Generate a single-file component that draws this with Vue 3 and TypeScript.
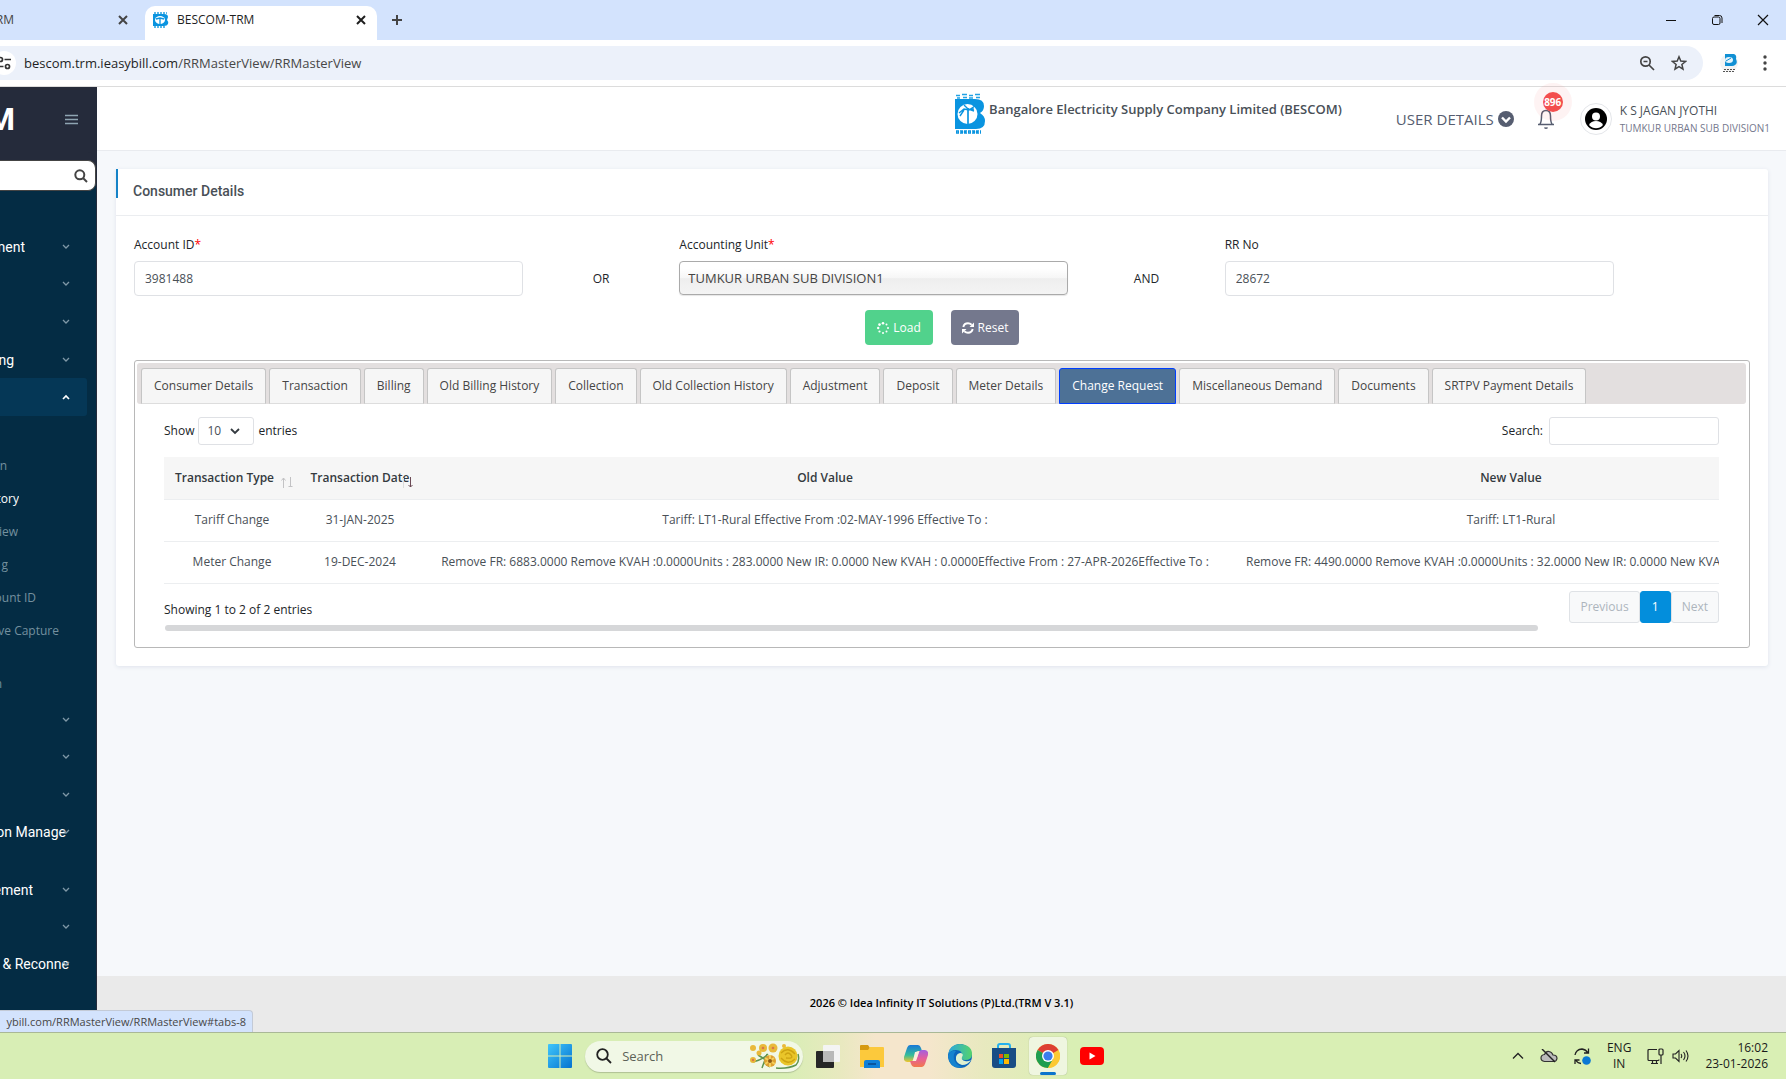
<script setup lang="ts">
import { ref } from 'vue'

interface MenuItem {
  text: string
  end: number
  tall?: boolean
  open?: boolean
}

const upperMenu: MenuItem[] = [
  { text: 'ment', end: 25 },
  { text: '', end: 0 },
  { text: '', end: 0 },
  { text: 'ng', end: 14 },
  { text: '', end: 0, open: true },
]

const subMenu: (MenuItem & { active?: boolean })[] = [
  { text: '', end: 0 },
  { text: 'n', end: 7 },
  { text: 'tory', end: 19, active: true },
  { text: 'iew', end: 18 },
  { text: 'g', end: 8 },
  { text: 'ount ID', end: 36 },
  { text: 've Capture', end: 59 },
  { text: 'n', end: 2, tall: true },
]

const lowerMenu: MenuItem[] = [
  { text: '', end: 0 },
  { text: '', end: 0 },
  { text: '', end: 0 },
  { text: 'on Manage', end: 66, tall: true },
  { text: 'ement', end: 33 },
  { text: '', end: 0 },
  { text: '& Reconne', end: 69, tall: true },
]

const tabs = [
  'Consumer Details',
  'Transaction',
  'Billing',
  'Old Billing History',
  'Collection',
  'Old Collection History',
  'Adjustment',
  'Deposit',
  'Meter Details',
  'Change Request',
  'Miscellaneous Demand',
  'Documents',
  'SRTPV Payment Details',
]
const activeTab = ref('Change Request')

const rows = [
  {
    type: 'Tariff Change',
    date: '31-JAN-2025',
    oldValue: 'Tariff: LT1-Rural Effective From :02-MAY-1996 Effective To :',
    newValue: 'Tariff: LT1-Rural',
  },
  {
    type: 'Meter Change',
    date: '19-DEC-2024',
    oldValue:
      'Remove FR: 6883.0000 Remove KVAH :0.0000Units : 283.0000 New IR: 0.0000 New KVAH : 0.0000Effective From : 27-APR-2026Effective To :',
    newValue: 'Remove FR: 4490.0000 Remove KVAH :0.0000Units : 32.0000 New IR: 0.0000 New KVAH : 0.0000',
  },
]

const accountId = ref('3981488')
const rrNo = ref('28672')
const search = ref('')
</script>

<template>
  <div class="screen">
    <header class="tabstrip">
      <div class="btab">
        <span class="cut btab-cut"><span>RM</span></span>
        <button class="plain" aria-label="Close tab">
          <svg width="10" height="10" viewBox="0 0 10 10"><path d="M1 1l8 8M9 1l-8 8" stroke="#444" stroke-width="2" /></svg>
        </button>
      </div>
      <div class="btab btab-active">
        <svg class="favicon" width="16" height="16" viewBox="0 0 16 16">
          <path d="M1 1h13M1 15h12" stroke="#5bb8e8" stroke-width="2" stroke-dasharray="2 1" />
          <path d="M0 2h11q4 0 4 3l-1 3q2 2 1 4-1 2-4 2H0z" fill="#0a94e0" />
          <ellipse cx="7" cy="8" rx="5" ry="4" fill="#fff" />
          <path d="M3 7l4-1 4 1M7 6v6" stroke="#0a94e0" stroke-width="1.3" fill="none" />
        </svg>
        <span class="btab-title">BESCOM-TRM</span>
        <button class="plain" aria-label="Close tab">
          <svg width="10" height="10" viewBox="0 0 10 10"><path d="M1 1l8 8M9 1l-8 8" stroke="#1f1f1f" stroke-width="2" /></svg>
        </button>
      </div>
      <button class="plain newtab" aria-label="New tab">
        <svg width="12" height="12" viewBox="0 0 12 12"><path d="M6 1v10M1 6h10" stroke="#444" stroke-width="2" /></svg>
      </button>
      <div class="wincontrols">
        <button class="plain" aria-label="Minimize">
          <svg width="12" height="12" viewBox="0 0 12 12"><path d="M1 6.500h10" stroke="#111" /></svg>
        </button>
        <button class="plain" aria-label="Restore">
          <svg width="12" height="12" viewBox="0 0 12 12" fill="none" stroke="#111"><rect x="1.500" y="3" width="7.500" height="7.500" rx="1.500" /><path d="M3.500 1.500h5q2.500 0 2.500 2.500v5" /></svg>
        </button>
        <button class="plain" aria-label="Close window">
          <svg width="12" height="12" viewBox="0 0 12 12"><path d="M1 1l10 10M11 1L1 11" stroke="#111" stroke-width="1.200" /></svg>
        </button>
      </div>
    </header>

    <div class="toolbar">
      <div class="address">
        <button class="plain site-chip" aria-label="Site information">
          <svg width="16" height="16" viewBox="0 0 16 16" fill="none" stroke="#333" stroke-width="1.700"><circle cx="4.500" cy="4.500" r="2" /><path d="M8.500 4.500H15M1 11.500h6.500" /><circle cx="11.500" cy="11.500" r="2" /></svg>
        </button>
        <span class="url"><b>bescom.trm.ieasybill.com</b>/RRMasterView/RRMasterView</span>
        <button class="plain" aria-label="Zoom">
          <svg width="16" height="16" viewBox="0 0 16 16" fill="none" stroke="#444" stroke-width="1.700"><circle cx="6.500" cy="6.500" r="4.700" /><path d="M10 10l5 5M4.500 6.500h4" /></svg>
        </button>
        <button class="plain" aria-label="Bookmark this tab">
          <svg width="16" height="16" viewBox="0 0 16 16" fill="none" stroke="#444" stroke-width="1.500"><path d="M8 1.800l1.800 4.300 4.700.4-3.600 3 1.100 4.600L8 11.700l-4 2.400 1.100-4.600-3.600-3 4.700-.4z" /></svg>
        </button>
      </div>
      <button class="plain profile" aria-label="Profile">
        <svg width="18" height="20" viewBox="0 0 18 20">
          <circle cx="9" cy="10" r="9" fill="#f3f3f3" />
          <path d="M5 1h9q3 1 2 5 2 4-1 6-1 1-3 1H5z" fill="#1190d4" />
          <ellipse cx="9" cy="7" rx="4" ry="3" fill="#e4f4fc" />
          <path d="M6 8l5-3" stroke="#1190d4" />
          <path d="M4 16.500h11M3 18.500h12" stroke="#555" stroke-dasharray="2 1" />
        </svg>
      </button>
      <button class="plain kebab" aria-label="Menu">
        <svg width="4" height="16" viewBox="0 0 4 16" fill="#444"><circle cx="2" cy="2" r="1.700" /><circle cx="2" cy="8" r="1.700" /><circle cx="2" cy="14" r="1.700" /></svg>
      </button>
    </div>

    <div class="page">
      <aside class="sidebar">
        <div class="brand">
          <span class="cut brand-name"><span>M</span></span>
          <button class="plain" aria-label="Toggle menu">
            <svg width="13" height="11" viewBox="0 0 13 11"><path d="M0 1.500h13M0 5.500h13M0 9.500h13" stroke="#8fa5b2" stroke-width="1.700" /></svg>
          </button>
        </div>
        <div class="side-search">
          <input type="text" aria-label="Search menu" />
          <svg width="14" height="14" viewBox="0 0 14 14" fill="none" stroke="#444" stroke-width="2"><circle cx="5.800" cy="5.800" r="4.500" /><path d="M9 9l4 4" /></svg>
        </div>
        <nav>
          <ul class="menu menu-upper">
            <li v-for="(item, i) in upperMenu" :key="i" :class="{ open: item.open }">
              <a href="#" class="cut" :style="{ width: item.end + 'px' }"><span>{{ item.text }}</span></a>
              <svg v-if="item.open" class="arrow" width="8" height="6" viewBox="0 0 8 6"><path d="M1 5l3-3 3 3" fill="none" stroke="#fff" stroke-width="1.700" /></svg>
              <svg v-else class="arrow" width="8" height="6" viewBox="0 0 8 6"><path d="M1 1l3 3 3-3" fill="none" stroke="#7f98a7" stroke-width="1.300" /></svg>
            </li>
          </ul>
          <ul class="submenu">
            <li v-for="(item, i) in subMenu" :key="i" :class="{ active: item.active, tall: item.tall }">
              <a href="#" class="cut" :style="{ width: item.end + 'px' }"><span>{{ item.text }}</span></a>
            </li>
          </ul>
          <ul class="menu menu-lower">
            <li v-for="(item, i) in lowerMenu" :key="i" :class="{ tall: item.tall }">
              <a href="#" class="cut" :style="{ width: item.end + 'px' }"><span>{{ item.text }}</span></a>
              <svg class="arrow" width="8" height="6" viewBox="0 0 8 6"><path d="M1 1l3 3 3-3" fill="none" stroke="#7f98a7" stroke-width="1.300" /></svg>
            </li>
          </ul>
        </nav>
      </aside>

      <div class="content">
        <header class="topbar">
          <div class="company">
            <svg width="30" height="42" viewBox="0 0 30 42">
              <path d="M1 2.500h4M7 1.500h5M14 2.500h4M20 1.500h5M2 5h3M8 4.500h4M14 5h4M21 4.500h4" stroke="#22a2e4" stroke-width="1.600" />
              <path d="M0 6h20q9 0 9 7 0 5-4 7 5 3 5 8 0 8-9 8H0z" fill="#0a94e0" />
              <circle cx="12.500" cy="21" r="10" fill="#fff" />
              <path d="M13 15v16" stroke="#0a94e0" stroke-width="1.700" />
              <path d="M4 20l5-4 5 1 6-4M5 23l4-6M9 12l4 4 6 2M13 17l6-1" fill="none" stroke="#0a94e0" stroke-width="1.400" />
              <path d="M1 39h25" stroke="#0a94e0" stroke-width="3.500" stroke-dasharray="3 1" />
              <path d="M2 39h23" stroke="#8fd0f2" stroke-width=".7" stroke-dasharray="1 2" />
            </svg>
            <strong>Bangalore Electricity Supply Company Limited (BESCOM)</strong>
          </div>
          <button class="plain user-details">
            USER DETAILS
            <svg width="16" height="16" viewBox="0 0 16 16"><circle cx="8" cy="8" r="8" fill="#565d70" /><path d="M4 6.500l4 4 4-4" fill="none" stroke="#fff" stroke-width="2.400" /></svg>
          </button>
          <button class="plain bell" aria-label="Notifications">
            <svg width="18" height="22" viewBox="0 0 18 22" fill="none" stroke="#565d70" stroke-width="1.500"><path d="M1 16.500h16M3 16q1.500-2 1.500-8 0-5.500 4.500-5.500t4.500 5.500q0 6 1.500 8M7.500 19.500q1.500 1.500 3 0" /></svg>
            <span class="badge">896</span>
          </button>
          <div class="user">
            <span class="avatar">
              <svg width="22" height="22" viewBox="0 0 22 22"><circle cx="11" cy="11" r="11" /><circle cx="11" cy="8.500" r="4" fill="#fff" /><path d="M4 17q2-4 7-4t7 4q-3 3.300-7 3.300T4 17z" fill="#fff" /></svg>
            </span>
            <div>
              <p class="user-name">K S JAGAN JYOTHI</p>
              <p class="user-unit">TUMKUR URBAN SUB DIVISION1</p>
            </div>
          </div>
        </header>

        <main>
          <section class="card">
            <div class="card-head"><h1>Consumer Details</h1></div>

            <form class="filters" @submit.prevent>
              <div class="field">
                <label for="account">Account ID<i>*</i></label>
                <input id="account" v-model="accountId" type="text" />
              </div>
              <span class="joiner">OR</span>
              <div class="field">
                <label for="unit">Accounting Unit<i>*</i></label>
                <select id="unit"><option>TUMKUR URBAN SUB DIVISION1</option></select>
              </div>
              <span class="joiner">AND</span>
              <div class="field">
                <label for="rr">RR No</label>
                <input id="rr" v-model="rrNo" type="text" />
              </div>
            </form>

            <div class="actions">
              <button class="btn btn-load">
                <svg width="12" height="12" viewBox="0 0 12 12" fill="#fff"><circle cx="6" cy="1.300" r="1.300" /><circle cx="9.500" cy="2.600" r="1" /><circle cx="11" cy="6" r="1" /><circle cx="9.500" cy="9.500" r="1" /><circle cx="6" cy="11" r="1" /><circle cx="2.500" cy="9.500" r="1.100" /><circle cx="1.200" cy="6" r="1.200" /><circle cx="2.500" cy="2.600" r="1.300" /></svg>
                Load
              </button>
              <button class="btn btn-reset">
                <svg width="12" height="12" viewBox="0 0 12 12"><path d="M1.300 5q.8-3.700 4.700-3.700 2 0 3.700 1.500M10.700 7q-.8 3.700-4.700 3.700-2 0-3.700-1.500" fill="none" stroke="#fff" stroke-width="1.900" /><path d="M12 .5V5H7.500zM0 11.500V7h4.500z" fill="#fff" /></svg>
                Reset
              </button>
            </div>

            <div class="tabs">
              <div class="tabs-nav" role="tablist">
                <button
                  v-for="tab in tabs"
                  :key="tab"
                  role="tab"
                  :aria-selected="tab === activeTab"
                  :class="['tab', { 'tab-active': tab === activeTab }]"
                  @click="activeTab = tab"
                >{{ tab }}</button>
              </div>

              <div class="panel">
                <div class="table-tools">
                  <label class="length">
                    Show
                    <span class="length-box">
                      <select><option>10</option></select>
                      <svg width="10" height="7" viewBox="0 0 10 7"><path d="M1 1l4 4 4-4" fill="none" stroke="#343a40" stroke-width="1.800" /></svg>
                    </span>
                    entries
                  </label>
                  <label class="finder">Search: <input v-model="search" type="search" /></label>
                </div>

                <div class="table-wrap">
                  <table>
                    <colgroup><col class="c-type" /><col class="c-date" /><col class="c-old" /><col class="c-new" /></colgroup>
                    <thead>
                      <tr>
                        <th class="sortable sortable-room">Transaction Type<svg class="sort" width="12" height="11" viewBox="0 0 12 11" fill="none" stroke="#c3c3c5"><path d="M2.500 11V1M.5 3.500l2-2.500 2 2.500M9.500 0v10M7.500 9.500h4" /></svg></th>
                        <th class="sortable">Transaction Date<svg class="sort" width="12" height="11" viewBox="0 0 12 11" fill="none"><path d="M2.500 11V1" stroke="#dcdcdc" /><path d="M9.500 0v10M7.500 8l2 2 2-2" stroke="#6b4a55" /></svg></th>
                        <th>Old Value</th>
                        <th>New Value</th>
                      </tr>
                    </thead>
                    <tbody>
                      <tr v-for="row in rows" :key="row.date">
                        <td>{{ row.type }}</td>
                        <td>{{ row.date }}</td>
                        <td>{{ row.oldValue }}</td>
                        <td>{{ row.newValue }}</td>
                      </tr>
                    </tbody>
                  </table>
                </div>

                <div class="table-foot">
                  <p>Showing 1 to 2 of 2 entries</p>
                  <div class="pager">
                    <button disabled>Previous</button>
                    <button class="current">1</button>
                    <button disabled>Next</button>
                  </div>
                </div>
                <div class="hscroll"></div>
              </div>
            </div>
          </section>
        </main>

        <footer>2026 © Idea Infinity IT Solutions (P)Ltd.(TRM V 3.1)</footer>
      </div>
      <div class="cut status"><span>ybill.com/RRMasterView/RRMasterView#tabs-8</span></div>
    </div>

    <div class="taskbar">
      <div class="apps">
        <button class="plain app" aria-label="Start">
          <svg width="24" height="24" viewBox="0 0 24 24">
            <defs><linearGradient id="win" x1="0" y1="0" x2="1" y2="1"><stop offset="0" stop-color="#3fc6fb" /><stop offset="1" stop-color="#0673d0" /></linearGradient></defs>
            <path d="M0 1q0-1 1-1h10.500v11.500H0zM12.500 0H23q1 0 1 1v10.500H12.500zM0 12.500h11.500V24H1q-1 0-1-1zM12.500 12.500H24V23q0 1-1 1H12.500z" fill="url(#win)" />
          </svg>
        </button>
        <label class="task-search">
          <svg width="16" height="16" viewBox="0 0 16 16" fill="none" stroke="#222" stroke-width="1.800"><circle cx="6.500" cy="6.500" r="5.300" /><path d="M10.500 10.500l4.500 4.500" /></svg>
          <input type="text" placeholder="Search" aria-label="Search" />
          <svg width="50" height="26" viewBox="0 0 50 26">
            <g fill="none" stroke="#5f9450" stroke-width="1.500"><path d="M3 19q9-2 15-8M12 25q3-8 5-14M26 25q12 1 20-3 4-4 2-11M8 12l8 5M20 24l-6-4" /></g>
            <g fill="#e9b93a"><circle cx="3" cy="5" r="3" /><circle cx="13" cy="5" r="4" /><circle cx="23" cy="5" r="4.500" /><circle cx="9" cy="10" r="2.500" /><circle cx="3" cy="17" r="3" /><circle cx="34" cy="3" r="2" /></g>
            <circle cx="20" cy="18" r="6" fill="#dda032" /><path d="M15 15l10 6M20 12v12M15 21l9-6" stroke="#f5cf5c" stroke-width="2" /><circle cx="20" cy="18" r="2" fill="#8c5a18" />
            <circle cx="38" cy="13" r="9.500" fill="#e9c52a" /><path d="M31 10q7-7 14 1M31 15q7 8 14 1M35 12q3-4 6 0t-5 3" fill="none" stroke="#cda312" stroke-width="1.300" />
            <g fill="#d9764a"><circle cx="13" cy="5" r="1.300" /><circle cx="23" cy="5" r="1.300" /><circle cx="3" cy="17" r="1.200" /></g>
          </svg>
        </label>
        <button class="plain app" aria-label="Task view">
          <svg width="24" height="24" viewBox="0 0 24 24"><rect y="7" width="18" height="17" rx="1" fill="#262626" /><rect x="7" y="1" width="17" height="17" rx="1" fill="#f4f4f4" /><rect x="7" y="7" width="11" height="11" fill="#b9b9b9" /></svg>
        </button>
        <button class="plain app" aria-label="File Explorer">
          <svg width="24" height="24" viewBox="0 0 24 24"><path d="M0 2q0-1 1-1h7l2 3v3H0z" fill="#d69a10" /><path d="M0 6h8l2-3h13q1 0 1 1v19H0z" fill="#fcc93c" /><path d="M4 24v-6q0-2 2-2h12q2 0 2 2v6z" fill="#1180d8" /><path d="M8 20h8" stroke="#0a559f" stroke-width="2" /></svg>
        </button>
        <button class="plain app" aria-label="Copilot">
          <svg width="24" height="24" viewBox="0 0 24 24">
            <defs>
              <linearGradient id="cpa" x1="0" y1="0" x2="0" y2="1"><stop offset="0" stop-color="#1a78d8" /><stop offset=".6" stop-color="#35bd9a" /><stop offset="1" stop-color="#f3c52b" /></linearGradient>
              <linearGradient id="cpb" x1="0" y1="1" x2="0" y2="0"><stop offset="0" stop-color="#f2794b" /><stop offset=".5" stop-color="#e55f9b" /><stop offset="1" stop-color="#a35fe0" /></linearGradient>
            </defs>
            <path d="M6 1h8q2 0 3 3l1 3h-4q-2 0-3 3l-2 6q-1 2-3 2H3q-4-1-3-5l3-9q1-3 3-3z" fill="url(#cpa)" />
            <path d="M18 23h-8q-2 0-3-3l-1-3h4q2 0 3-3l2-6q1-2 3-2h3q4 1 3 5l-3 9q-1 3-3 3z" fill="url(#cpb)" />
            <path d="M11 8h4l-3 9H9z" fill="#fbeedd" />
          </svg>
        </button>
        <button class="plain app" aria-label="Edge">
          <svg width="24" height="24" viewBox="0 0 24 24">
            <defs><linearGradient id="edg" x1="0" y1="0" x2="1" y2="0"><stop offset="0" stop-color="#2aa7e0" /><stop offset="1" stop-color="#55d36b" /></linearGradient></defs>
            <circle cx="12" cy="12" r="12" fill="#0c66bb" />
            <path d="M0 11Q2 0 12 0q12 1 12 10 0 6-7 6-4 0-3-3Q15 6 8 6 2 6 0 11z" fill="url(#edg)" />
            <path d="M14 13q-1 3 3 4 3 1 6-1-3 5-9 5-7-2-6-8 1-4 5-4 3 1 1 4z" fill="#dff0d0" />
            <path d="M0 12q2-6 8-5-3 3-2 8t8 8Q2 26 0 12z" fill="#1583cf" />
          </svg>
        </button>
        <button class="plain app" aria-label="Microsoft Store">
          <svg width="24" height="26" viewBox="0 0 24 26"><path d="M6 6V3q0-2 2-2h8q2 0 2 2v3" fill="none" stroke="#24b1ee" stroke-width="2" /><path d="M0 5h24v17q0 3-3 3H3q-3 0-3-3z" fill="#184d85" /><path d="M7 11h4v4H7z" fill="#f05022" /><path d="M12 11h5v4h-5z" fill="#7fba00" /><path d="M7 16h4v5H7z" fill="#00a4ef" /><path d="M12 16h5v5h-5z" fill="#ffb900" /></svg>
        </button>
        <button class="plain app app-current" aria-label="Chrome">
          <svg width="24" height="24" viewBox="0 0 24 24"><circle cx="12" cy="12" r="12" fill="#fcc934" /><path d="M12 12L1.600 6A12 12 0 0 1 22.400 6z" fill="#dd4032" /><path d="M12 12L1.600 6A12 12 0 0 0 12 24l5.500-9z" fill="#1e9e50" /><path d="M12 6h10.400L17 15l-5 9a12 12 0 0 0 10.400-18z" fill="#fcc934" /><circle cx="12" cy="12" r="6" fill="#fff" /><circle cx="12" cy="12" r="4.600" fill="#3b7ded" /></svg>
        </button>
        <button class="plain app" aria-label="YouTube">
          <svg width="24" height="18" viewBox="0 0 24 18"><rect width="24" height="18" rx="4" fill="#f00" /><path d="M9.500 5.500l6 3.500-6 3.500z" fill="#fff" /></svg>
        </button>
      </div>
      <div class="tray">
        <svg width="12" height="8" viewBox="0 0 12 8"><path d="M1 6.500l5-5 5 5" fill="none" stroke="#222" stroke-width="1.300" /></svg>
        <svg width="18" height="14" viewBox="0 0 18 14"><path d="M4.500 12.500Q1 12 1 9t3.500-3.500Q6 2 9 2.500t4 3.500q4 0 4 3.500-.5 3-3.500 3z" fill="#bbb" stroke="#333" stroke-width="1.200" /><path d="M2 0l13 13" stroke="#222" stroke-width="1.400" /></svg>
        <svg width="17" height="17" viewBox="0 0 17 17" fill="none" stroke="#222" stroke-width="1.300"><path d="M1 7q1-5.500 7-6 4 .500 6 4M14.500.5V5H10M1 16v-4h4.500M2 12.500q2 3 5 3" /><circle cx="12.500" cy="12.500" r="4.300" fill="#0a78d4" stroke="none" /></svg>
        <span class="lang">ENG<br />IN</span>
        <div class="devices">
          <svg width="17" height="17" viewBox="0 0 17 17" fill="none" stroke="#222" stroke-width="1.200"><path d="M10 1.500H2Q1 1.500 1 2.500v9q0 1 1 1h9q1 0 1-1M4 15.500h7M5.500 13v2M9.500 13v2M14 7v9" /><rect x="12" y="1" width="4" height="6" rx="1" /></svg>
          <svg width="17" height="14" viewBox="0 0 17 14" fill="none" stroke="#222" stroke-width="1.100"><path d="M1 5h2.500L7 1.500v11L3.500 9H1zM9 5q1.500 2 0 4M11.500 3q3 4 0 8M14 1.500q4 5.500 0 11" /></svg>
        </div>
        <time>16:02<br />23-01-2026</time>
      </div>
    </div>
  </div>
</template>

<style>
body {
  margin: 0;
  font-family: 'Open Sans', 'Noto Sans', sans-serif;
}
</style>

<style scoped>
.screen {
  min-height: 100vh;
  display: flex;
  flex-direction: column;
  font-size: 12px;
  line-height: 18px;
  color: #212529;
  box-sizing: border-box;
}
.screen *,
.screen *::before {
  box-sizing: border-box;
}
p,
h1,
ul {
  margin: 0;
  padding: 0;
  list-style: none;
}
svg {
  display: block;
  flex: none;
}
button,
input,
select {
  font: inherit;
  color: inherit;
}
a {
  color: inherit;
  text-decoration: none;
}
.plain {
  display: flex;
  align-items: center;
  justify-content: center;
  padding: 0;
  border: 0;
  background: none;
}
/* keeps the tail of a label in view when its start is off the left edge */
.cut {
  display: flex;
  justify-content: flex-end;
  overflow: hidden;
  white-space: nowrap;
}

/* browser frame */
.tabstrip {
  height: 40px;
  display: flex;
  align-items: flex-end;
  background: #d3e3fd;
}
.btab {
  width: 145px;
  height: 34px;
  padding-right: 17px;
  display: flex;
  align-items: center;
  justify-content: space-between;
  color: #444;
  padding-bottom: 6px;
}
.btab-cut {
  width: 14px;
}
.btab-active {
  width: 232px;
  padding: 0 11px 6px 8px;
  gap: 8px;
  border-radius: 10px 10px 0 0;
  background: #fff;
  color: #1f1f1f;
}
.btab-title {
  flex: 1;
}
.newtab {
  width: 40px;
  height: 40px;
}
.wincontrols {
  margin-left: auto;
  display: flex;
}
.wincontrols button {
  width: 46px;
  height: 40px;
}
.toolbar {
  height: 47px;
  display: flex;
  align-items: center;
  background: #fff;
  border-bottom: 1px solid #dcdcdc;
}
.address {
  flex: 1;
  height: 34px;
  padding-right: 16px;
  display: flex;
  align-items: center;
  gap: 16px;
  background: #ecf1fa;
  border-radius: 0 17px 17px 0;
  overflow: hidden;
  font-size: 13px;
}
.site-chip {
  width: 24px;
  height: 24px;
  margin-left: -8px;
  border-radius: 50%;
  background: #fff;
}
.url {
  flex: 1;
  margin-left: -8px;
  color: #474747;
}
.url b {
  font-weight: 400;
  color: #1f1f1f;
}
.profile {
  margin-left: 17px;
}
.kebab {
  width: 40px;
  margin-right: 8px;
  padding-left: 14px;
}

/* page */
.page {
  position: relative;
  flex: 1;
  display: flex;
  background: #f6f8fb;
}
.sidebar {
  width: 97px;
  overflow: hidden;
  background: #042c44;
  border-right: 1px solid #252b3b;
  font-family: Roboto, sans-serif;
  font-size: 14px;
  color: #fff;
}
.brand {
  height: 73px;
  padding: 0 18px 9px 0;
  display: flex;
  align-items: center;
  justify-content: space-between;
  background: #252b3b;
}
.brand-name {
  width: 15px;
  font-size: 32px;
  font-weight: 700;
  line-height: 40px;
}
.side-search {
  height: 31px;
  padding-right: 7px;
  display: flex;
  align-items: center;
  background: #fff;
  border: 1px solid #444;
  border-left: 0;
  border-radius: 0 8px 8px 0;
  box-shadow: 0 -8px 0 #252b3b;
}
.side-search input {
  flex: 1;
  min-width: 0;
  border: 0;
  padding: 0;
  background: none;
}
nav {
  padding-top: 37px;
}
.menu {
  display: flex;
  flex-direction: column;
}
.menu-upper {
  height: 188px;
}
.menu-lower {
  height: 302px;
}
.menu li {
  position: relative;
  flex: 1;
  display: flex;
  align-items: center;
}
.menu .tall {
  flex: 0 0 57px;
  padding-bottom: 20px;
}
.menu .open {
  margin-right: 9px;
  background: #053756;
  border-radius: 0 3px 3px 0;
}
.arrow {
  position: absolute;
  left: 62px;
}
.submenu {
  font-family: 'Open Sans', sans-serif;
  font-size: 12px;
  color: #74909f;
}
.submenu li {
  height: 33px;
  display: flex;
  align-items: center;
}
.submenu .active {
  color: #fff;
}
.submenu .tall {
  height: 54px;
  padding-top: 19px;
}
.content {
  flex: 1;
  min-width: 0;
  display: flex;
  flex-direction: column;
}
.topbar {
  height: 64px;
  padding-right: 16px;
  display: flex;
  align-items: center;
  justify-content: flex-end;
  background: #fff;
  border-bottom: 1px solid #e9ebef;
}
.company {
  display: flex;
  gap: 4px;
  margin-right: 54px;
  align-self: flex-start;
  padding-top: 6px;
  font-size: 13px;
  line-height: 32px;
  color: #495057;
}
.company strong {
  font-weight: 600;
}
.user-details {
  gap: 4px;
  font-size: 15px;
  color: #565d70;
}
.bell {
  position: relative;
  margin: 0 25px 0 23px;
}
.badge {
  position: absolute;
  left: 6px;
  top: -16px;
  width: 20px;
  height: 20px;
  border-radius: 50%;
  background: #f34e4e;
  box-shadow: 0 0 0 9px #f34e4e12;
  color: #fff;
  font-size: 10px;
  font-weight: 700;
  line-height: 20px;
}
.user {
  display: flex;
  align-items: center;
  gap: 8px;
}
.avatar {
  padding: 4px;
  border: 1px solid #e4e6ea;
  border-radius: 50%;
}
.user-name {
  color: #495057;
}
.user-unit {
  font-size: 10px;
  line-height: 16px;
  color: #74788d;
}

main {
  flex: 1;
  padding: 18px 18px 24px 19px;
}
.card {
  background: #fff;
  border-radius: 3px;
  box-shadow: 0 1px 4px #dfe3ec;
  padding-bottom: 18px;
}
.card-head {
  position: relative;
  height: 47px;
  padding-left: 17px;
  border-bottom: 1px solid #ebedf0;
}
.card-head::before {
  content: '';
  position: absolute;
  left: 0;
  top: 0;
  width: 2px;
  height: 29px;
  background: #1583c7;
}
h1 {
  font-family: Roboto, sans-serif;
  font-size: 14px;
  line-height: 45px;
  font-weight: 500;
  color: #495057;
}
.filters {
  display: grid;
  grid-template-columns: 3fr 1fr 3fr 1fr 3fr 1fr;
  padding: 20px 8px 0 8px;
}
.field {
  display: flex;
  flex-direction: column;
  gap: 7px;
  padding: 0 10px;
}
.field i {
  color: #f00;
  font-style: normal;
}
.field input,
.field select {
  height: 35px;
  padding: 0 10px;
  border: 1px solid #dfe1e5;
  border-radius: 4px;
  background: #fff;
  color: #495057;
}
.field select {
  appearance: none;
  height: 34px;
  padding: 0 8px;
  border-color: #aaa;
  background: linear-gradient(#fff 20%, #f6f6f6 50%, #eee 52%, #f4f4f4 100%);
  box-shadow: 0 1px 1px #0000001a;
  font-size: 13px;
  color: #444;
}
.joiner {
  align-self: end;
  text-align: center;
  line-height: 35px;
}
.actions {
  display: flex;
  justify-content: center;
  gap: 18px;
  padding: 14px 0 15px;
}
.btn {
  width: 68px;
  height: 35px;
  display: flex;
  align-items: center;
  justify-content: center;
  gap: 4px;
  padding: 0;
  border: 0;
  border-radius: 4px;
  color: #fff;
}
.btn-load {
  background: #51d28c;
}
.btn-reset {
  background: #74788d;
}

.tabs {
  margin: 0 18px;
  padding: 2px 3px 16px 2px;
  border: 1px solid #b8b8b8;
  border-radius: 3px;
}
.tabs-nav {
  display: flex;
  gap: 3px;
  padding: 5px 4px 0;
  background: #e3dfdf;
  border-radius: 3px;
}
.tab {
  height: 36px;
  padding: 0 12px;
  border: 1px solid #c5c5c5;
  border-bottom-color: #dddddd;
  border-radius: 3px 3px 0 0;
  background: #f6f6f6;
  color: #454545;
  white-space: nowrap;
}
.tab-active {
  border-color: #003eff;
  background: #4d7196;
  color: #fff;
}
.panel {
  padding: 13px 27px 0 27px;
}
.table-tools {
  display: flex;
  justify-content: space-between;
}
.length,
.finder {
  display: flex;
  align-items: center;
  gap: 4px;
}
.length-box {
  position: relative;
  display: flex;
}
.length-box select {
  appearance: none;
  width: 56px;
  height: 28px;
  padding: 0 8px;
  border: 1px solid #dfe1e5;
  border-radius: 3px;
  background: #fff;
  color: #495057;
}
.length-box svg {
  position: absolute;
  right: 14px;
  top: 11px;
  pointer-events: none;
}
.finder {
  gap: 6px;
}
.finder input {
  width: 170px;
  height: 28px;
  padding: 0 8px;
  border: 1px solid #dfe1e5;
  border-radius: 3px;
}
.table-wrap {
  margin-top: 12px;
  overflow: hidden;
}
table {
  width: 1628px;
  table-layout: fixed;
  border-collapse: collapse;
}
.c-type {
  width: 136px;
}
.c-date {
  width: 120px;
}
.c-old {
  width: 810px;
}
.c-new {
  width: 562px;
}
th,
td {
  height: 42px;
  padding: 0;
  border-bottom: 1px solid #eceef0;
  text-align: center;
  white-space: nowrap;
  color: #495057;
}
th {
  background: #f6f6f6;
  font-weight: 600;
  color: #343a40;
}
.sortable {
  position: relative;
}
.sortable-room {
  padding-right: 15px;
}
.sort {
  position: absolute;
  right: 7px;
  bottom: 11px;
}
.table-foot {
  display: flex;
  justify-content: space-between;
  padding-top: 7px;
}
.table-foot p {
  padding-top: 10px;
}
.pager {
  display: flex;
}
.pager button {
  height: 32px;
  padding: 0 10px;
  border: 1px solid #dfe2e6;
  border-radius: 3px;
  background: #f8f9fa;
  color: #adb5bd;
}
.pager .current {
  width: 31px;
  background: #038edc;
  border-color: #038edc;
  color: #fff;
}
.hscroll {
  width: 1373px;
  max-width: 100%;
  height: 6px;
  margin: 2px 0 0 1px;
  border-radius: 3px;
  background: #d6d7d9;
}
footer {
  height: 56px;
  background: #eaeaea;
  text-align: center;
  font-size: 11px;
  font-weight: 600;
  line-height: 54px;
  color: #000;
}
.status {
  position: absolute;
  left: 0;
  bottom: 0;
  width: 253px;
  height: 22px;
  padding-right: 6px;
  border: 1px solid #c3cad6;
  border-width: 1px 1px 0 0;
  border-radius: 0 4px 0 0;
  background: #d3e3fd;
  color: #474747;
  font-size: 11px;
  line-height: 21px;
}

/* taskbar */
.taskbar {
  height: 47px;
  display: grid;
  grid-template-columns: 23fr auto 17fr auto;
  grid-template-rows: 46px;
  align-items: center;
  border-top: 1px solid #a9b896;
  background: linear-gradient(90deg, #d8eeb5 0 44%, #e8e9bf 47%, #f5e6cc 49% 52%, #e8e9bf 55%, #d9efb4 60% 100%);
}
.apps {
  grid-column: 2;
  display: flex;
  align-items: center;
}
.app {
  width: 44px;
  height: 46px;
}
.app-current {
  position: relative;
}
.app-current::before {
  content: '';
  position: absolute;
  inset: 4px 3px;
  border-radius: 4px;
  background: #eff6e0;
  box-shadow: 0 0 1px #8a9a78;
}
.app-current::after {
  content: '';
  position: absolute;
  bottom: 4px;
  width: 16px;
  height: 3px;
  border-radius: 2px;
  background: #0a74cc;
}
.app-current svg {
  position: relative;
}
.task-search {
  width: 218px;
  height: 31px;
  margin: 0 3px;
  padding: 0 3px 0 11px;
  display: flex;
  align-items: center;
  gap: 10px;
  border-radius: 16px;
  background: #f1f8e6;
  box-shadow: 0 1px 1px #8a9a7888;
}
.task-search input {
  flex: 1;
  min-width: 0;
  padding: 0;
  border: 0;
  background: none;
  font-size: 13px;
}
.task-search input::placeholder {
  color: #5c6257;
}
.tray {
  grid-column: 4;
  display: flex;
  align-items: center;
  padding-right: 18px;
  gap: 16px;
  line-height: 16px;
  color: #1a1a1a;
}
.lang {
  text-align: center;
}
.devices {
  display: flex;
  align-items: center;
  gap: 8px;
}
time {
  text-align: right;
}
</style>
